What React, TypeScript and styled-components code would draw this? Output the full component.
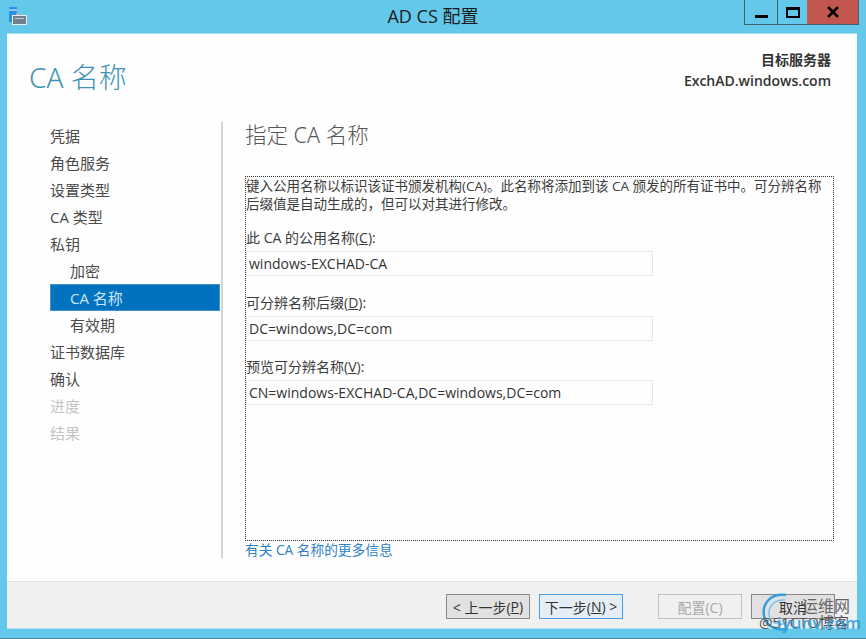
import React from "react";
import styled, { createGlobalStyle } from "styled-components";

const FONT = `"Open Sans", "Noto Sans", "Noto Sans CJK SC", sans-serif`;

const Global = createGlobalStyle`
  html, body {
    margin: 0;
    padding: 0;
    background: #63c8ea;
  }
`;

const Frame = styled.div`
  width: 866px;
  height: 639px;
  box-sizing: border-box;
  display: flex;
  flex-direction: column;
  background: #63c8ea;
  font-family: ${FONT};
  color: #3c3c3c;
  position: relative;
  overflow: hidden;
  border-bottom: 1px solid #5a7f8c;
`;

const TitleBar = styled.div`
  height: 33px;
  flex: none;
  display: flex;
  align-items: flex-start;
  position: relative;
`;

const AppIcon = styled.svg`
  width: 20px;
  height: 20px;
  margin: 6px 0 0 8px;
  flex: none;
`;

const TitleText = styled.div`
  position: absolute;
  left: 0;
  right: 0;
  top: 6px;
  text-align: center;
  font-size: 18px;
  line-height: 20px;
  color: #1c1c1c;
`;

const Controls = styled.div`
  display: flex;
  margin-left: auto;
  margin-right: 7px;
  height: 24px;
  border: 1px solid #3f5f6e;
  border-top: none;
  position: relative;
`;

const WinButton = styled.div<{ $close?: boolean; $w: number }>`
  width: ${(p) => p.$w}px;
  display: flex;
  align-items: center;
  justify-content: center;
  box-sizing: border-box;
  background: ${(p) => (p.$close ? "#c2574f" : "transparent")};
  border-left: ${(p) => (p.$close ? "none" : "1px solid #3f5f6e")};
  &:first-child {
    border-left: none;
  }
`;

const MinGlyph = styled.div`
  width: 13px;
  height: 3px;
  background: #000;
  margin-top: 8px;
`;

const MaxGlyph = styled.div`
  width: 14px;
  height: 11px;
  box-sizing: border-box;
  border: 2px solid #000;
  border-top-width: 3px;
`;

const Client = styled.div`
  width: 850px;
  height: 596px;
  margin-left: 7px;
  flex: none;
  display: flex;
  flex-direction: column;
  background: #fefefe;
  border-top: 1px solid #a9dcef;
  box-sizing: border-box;
`;

const Head = styled.div`
  height: 88px;
  flex: none;
  display: flex;
  justify-content: space-between;
  padding: 0 26px 0 22px;
`;

const PageTitle = styled.h1`
  margin: 22px 0 0;
  font-size: 28px;
  font-weight: 300;
  line-height: 42px;
  color: #3d93b5;
  font-family: "Noto Sans", "Noto Sans CJK SC", sans-serif;
`;

const Server = styled.div`
  margin-top: 15px;
  text-align: right;
  font-size: 14px;
  font-weight: 600;
  line-height: 21px;
  color: #333;
`;

const Main = styled.div`
  flex: 1;
  display: flex;
  padding-left: 43px;
  min-height: 0;
`;

const Nav = styled.div`
  width: 171px;
  flex: none;
  display: flex;
  flex-direction: column;
  height: 436px;
  border-right: 2px solid #d4d4d4;
`;

const NavItem = styled.div<{ $sub?: boolean; $active?: boolean; $off?: boolean }>`
  height: 27px;
  margin-right: 1px;
  padding-left: ${(p) => (p.$active ? 19 : p.$sub ? 20 : 0)}px;
  font-size: 15px;
  box-sizing: border-box;
  color: ${(p) => (p.$active ? "#cfe6f6" : p.$off ? "#c4c4c4" : "#4a4a4a")};
  background: ${(p) => (p.$active ? "#0072c0" : "transparent")};
  border: ${(p) => (p.$active ? "1px solid #3d94cf" : "none")};
  line-height: ${(p) => (p.$active ? 27 : 29)}px;
`;

const Content = styled.div`
  flex: 1;
  display: flex;
  flex-direction: column;
  padding: 0 23px 0 22px;
  min-width: 0;
`;

const Heading = styled.h2`
  margin: 0;
  height: 54px;
  font-size: 21.5px;
  font-weight: 300;
  line-height: 26px;
  color: #555;
  font-family: "Noto Sans", "Noto Sans CJK SC", sans-serif;
`;

const FocusBox = styled.div`
  height: 365px;
  flex: none;
  box-sizing: border-box;
  border: 1px dotted #333;
  display: flex;
  flex-direction: column;
`;

const Intro = styled.p`
  margin: 0;
  font-size: 13.5px;
  line-height: 18px;
  color: #3c3c3c;
  white-space: nowrap;
`;

const Group = styled.div<{ $gap: number }>`
  margin-top: ${(p) => p.$gap}px;
  display: flex;
  flex-direction: column;
`;

const FieldLabel = styled.label`
  font-size: 14px;
  line-height: 18px;
  height: 22px;
  color: #3c3c3c;
`;

const Field = styled.div`
  width: 407px;
  height: 25px;
  box-sizing: border-box;
  border: 1px solid #e6e6ee;
  padding-left: 2px;
  font-size: 14px;
  line-height: 23px;
  color: #333;
  white-space: nowrap;
`;

const Link = styled.a`
  font-size: 13.7px;
  line-height: 18px;
  color: #2f80c8;
`;

const Footer = styled.div`
  height: 48px;
  flex: none;
  box-sizing: border-box;
  background: #f0f0f0;
  border-top: 1px solid #e3e3e3;
  border-bottom: 1px solid #b3dff0;
  display: flex;
  align-items: flex-start;
  padding: 12px 0 0 439px;
`;

const Btn = styled.div<{ $focus?: boolean; $off?: boolean; $gap?: number }>`
  width: 84px;
  height: 25px;
  box-sizing: border-box;
  margin-left: ${(p) => p.$gap ?? 0}px;
  display: flex;
  align-items: center;
  justify-content: center;
  font-size: 14px;
  color: ${(p) => (p.$off ? "#a8a8a8" : "#333")};
  background: ${(p) => (p.$focus ? "#e6eef5" : p.$off ? "#f0f0f0" : "#e1e1e1")};
  border: 1px solid ${(p) => (p.$focus ? "#4a9ee8" : p.$off ? "#c2c2c2" : "#888")};
  white-space: nowrap;
`;

const Key = styled.span`
  text-decoration: underline;
`;

const Watermark = styled.div`
  position: absolute;
  left: 756px;
  top: 590px;
  width: 110px;
  height: 46px;
`;

const Ring = styled.svg`
  position: absolute;
  left: 0;
  top: 0;
  width: 50px;
  height: 46px;
`;

const MarkTop = styled.div`
  position: absolute;
  left: 46px;
  top: 6px;
  font-size: 16px;
  line-height: 20px;
  color: #666;
  white-space: nowrap;
`;

const MarkBottom = styled.div`
  position: absolute;
  left: 3px;
  top: 24px;
  font-size: 15px;
  line-height: 16px;
  color: #555;
  white-space: nowrap;
`;

const MarkBrand = styled.div`
  position: absolute;
  left: 21px;
  top: 22px;
  font-size: 17px;
  font-weight: 600;
  line-height: 22px;
  color: #2f9fe0;
  white-space: nowrap;
  opacity: 0.9;
`;

export default function App() {
  return (
    <Frame>
      <Global />
      <TitleBar>
        <AppIcon viewBox="0 0 20 20">
          <rect x="1" y="1" width="8" height="15" fill="#2d8fe0" />
          <rect x="1" y="3" width="8" height="2" fill="#8cc4f0" />
          <rect x="4" y="9" width="15" height="10" fill="#e6eef2" />
          <rect x="5" y="10" width="13" height="8" fill="#71808c" />
          <rect x="7" y="12" width="9" height="1" fill="#c2cdd4" />
          <rect x="8" y="7" width="4" height="2" fill="#9fb0bb" />
        </AppIcon>
        <TitleText>AD CS 配置</TitleText>
        <Controls>
          <WinButton $w={32}>
            <MinGlyph />
          </WinButton>
          <WinButton $w={30}>
            <MaxGlyph />
          </WinButton>
          <WinButton $close $w={51}>
            <svg width="14" height="12" viewBox="0 0 14 12">
              <path d="M2 1l10 10M12 1L2 11" stroke="#000" strokeWidth="2.6" fill="none" />
            </svg>
          </WinButton>
        </Controls>
      </TitleBar>
      <Client>
        <Head>
          <PageTitle>CA 名称</PageTitle>
          <Server>
            目标服务器
            <br />
            ExchAD.windows.com
          </Server>
        </Head>
        <Main>
          <Nav>
            <NavItem>凭据</NavItem>
            <NavItem>角色服务</NavItem>
            <NavItem>设置类型</NavItem>
            <NavItem>CA 类型</NavItem>
            <NavItem>私钥</NavItem>
            <NavItem $sub>加密</NavItem>
            <NavItem $sub $active>CA 名称</NavItem>
            <NavItem $sub>有效期</NavItem>
            <NavItem>证书数据库</NavItem>
            <NavItem>确认</NavItem>
            <NavItem $off>进度</NavItem>
            <NavItem $off>结果</NavItem>
          </Nav>
          <Content>
            <Heading>指定 CA 名称</Heading>
            <FocusBox>
              <Intro>
                键入公用名称以标识该证书颁发机构(CA)。此名称将添加到该 CA 颁发的所有证书中。可分辨名称
                <br />
                后缀值是自动生成的，但可以对其进行修改。
              </Intro>
              <Group $gap={16}>
                <FieldLabel>此 CA 的公用名称(<Key>C</Key>):</FieldLabel>
                <Field>windows-EXCHAD-CA</Field>
              </Group>
              <Group $gap={18}>
                <FieldLabel>可分辨名称后缀(<Key>D</Key>):</FieldLabel>
                <Field>DC=windows,DC=com</Field>
              </Group>
              <Group $gap={17}>
                <FieldLabel>预览可分辨名称(<Key>V</Key>):</FieldLabel>
                <Field>CN=windows-EXCHAD-CA,DC=windows,DC=com</Field>
              </Group>
            </FocusBox>
            <Link>有关 CA 名称的更多信息</Link>
          </Content>
        </Main>
        <Footer>
          <Btn>&lt; 上一步(<Key>P</Key>)</Btn>
          <Btn $focus $gap={9}>下一步(<Key>N</Key>) &gt;</Btn>
          <Btn $off $gap={35}>配置(C)</Btn>
          <Btn $gap={9}>取消</Btn>
        </Footer>
      </Client>
      <Watermark>
        <Ring viewBox="0 0 50 46">
          <path d="M30 5C14 3 6 14 8 26c2 10 12 15 22 13" stroke="#2f9fe0" strokeWidth="2.5" fill="none" />
          <path d="M29 10C19 9 12 16 13 25c1 7 8 10 14 9" stroke="#7cc4ee" strokeWidth="1.5" fill="none" />
        </Ring>
        <MarkTop>运维网</MarkTop>
        <MarkBottom>@51CTO博客</MarkBottom>
        <MarkBrand>iyunv.com</MarkBrand>
      </Watermark>
    </Frame>
  );
}
